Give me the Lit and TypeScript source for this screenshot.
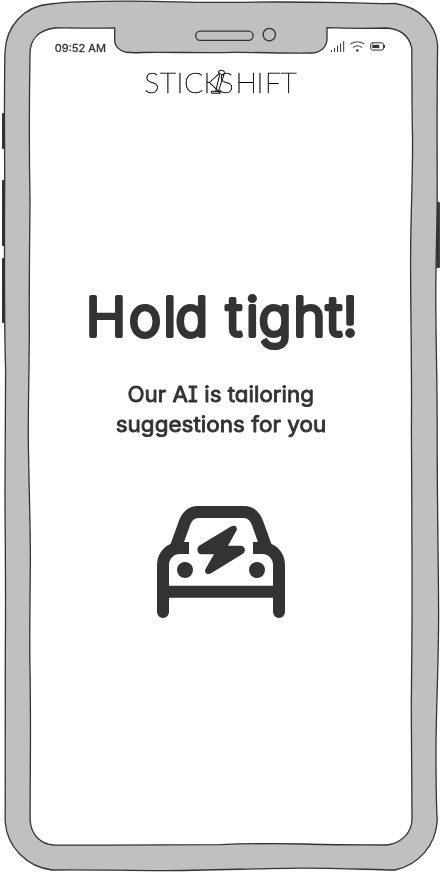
import { LitElement, html, css, svg } from "lit";
import { customElement } from "lit/decorators.js";

@customElement("phone-frame")
class PhoneFrame extends LitElement {
  static styles = css`
    :host { display: block; width: 442px; height: 873px; }
    svg { display: block; }
    .line { stroke: #333; stroke-width: 1.3; }
    .body { fill: #c0c0c0; }
    .screen { fill: #fff; }
    .none { fill: none; }
    .button { fill: #333; }
  `;
  render() {
    return html`<svg width="442" height="873" viewBox="0 0 442 873">
      ${[[2, 113, 36], [2, 180, 66], [2, 258, 65], [436.3, 202, 66]].map(
        ([x, y, h]) => svg`<rect class="button" x=${x} y=${y} width="3.6" height=${h} rx="1"/>`
      )}
      <path class="line body" d="M5 52 C6 26 24 6 50 4 C66 2 90 1.2 125 1.2 C160 1 190 2.6 221 2.4 C265 1.8 310 2 345 2.7 C365 3 378 4 395 3.5 C420 7 436 25 437.6 45 C436.8 100 437.2 145 437.2 190 C437.2 230 435.6 265 435.8 300 C436 350 437.2 380 437.2 430 C437 500 438.5 560 438.6 615 C438.5 670 436 710 436 750 C436 790 436 805 437.3 820 C436 846 418 865 395 870 C370 869.7 340 868 300 868.1 C260 868.3 210 870.6 160 870.7 C120 870.5 80 869.3 52 870 C27 867 7 847 5.2 822 C5.5 770 5 710 5.3 650 C6 590 5 530 5 490 C5.2 460 5.6 420 5.6 370 C4.4 335 4.4 260 4.6 200 C5 160 3.8 100 5 52Z"/>
      <path class="line screen" d="M114.7 27.9 C95 28.4 75 27.8 55 28 C39 30 30 39 30 54 C29.4 90 29 150 30 200 C29.6 250 29 290 29.3 330 C29.3 370 28.1 400 28.3 440 C29 490 30.3 520 30.4 560 C30 600 29.4 640 30 670 C31 720 30.2 770 30.1 820 C31 834 40 844.5 54 845 C110 845.2 170 845 221 844.6 C250 843.5 285 843.5 305 844 C335 845 360 844.7 387 845 C402 843 412 832 412 819 C412 780 411.3 750 411.3 710 C411.5 670 412.3 630 412 570 C412 520 411.6 480 411.4 430 C412 370 410.5 310 410.6 260 C410.6 215 413 175 412.5 135 C411.8 110 412 75 411.8 48 C409 36 400 29 387 28 C367 28.8 347 28.5 327 27.7 V40 C326 48 320 53 311 53 C285 53.4 260 52.3 235 52.4 C200 53.2 170 52 142 52.5 C134 53.4 130 52 126 52.3 C119 50.5 114.7 46 114.7 41Z"/>
      <rect class="line none" x="195.7" y="31.1" width="57.4" height="9.3" rx="4.6"/>
      <circle class="line none" cx="269.3" cy="34.6" r="6.2"/>
    </svg>`;
  }
}

@customElement("status-bar")
class StatusBar extends LitElement {
  static styles = css`
    :host { display: flex; justify-content: space-between; height: 18px; padding: 0 56px 0 54px; }
    svg { display: block; will-change: transform; }
    text { font: 400 10.8px Inter, "Noto Sans", sans-serif; fill: #333; stroke: #333; stroke-width: .3; }
    .stroke { fill: none; stroke: #333; stroke-width: 1; stroke-linecap: round; }
    .fill { fill: #333; }
  `;
  render() {
    return html`
      <svg width="60" height="18" viewBox="54 38 60 18"><text x="54.7" y="51.6" textLength="51.3" lengthAdjust="spacingAndGlyphs">09:52 AM</text></svg>
      <svg width="57" height="18" viewBox="329 38 57 18">
        <path class="stroke" d="M331.5 50.5V51.6M334.6 48.2V51.6M337.6 46V51.6M340.6 43.8V51.6M343.7 41.4V51.6"/>
        <path class="stroke" d="M350.7 43.8Q357.5 39.6 364.1 43.8M353.2 47.3Q357.5 44.2 361.6 47.3"/>
        <circle class="fill" cx="357.4" cy="50.5" r="1.2"/>
        <rect class="stroke" x="370.7" y="42.8" width="12.8" height="7.3" rx="2"/>
        <rect class="fill" x="372.3" y="44.8" width="7" height="3.3"/>
        <path class="stroke" d="M384.5 45.4V47.4"/>
      </svg>`;
  }
}

@customElement("brand-logo")
class BrandLogo extends LitElement {
  static styles = css`
    :host { display: block; align-self: center; }
    svg { display: block; will-change: transform; }
    text { font: 100 28.6px Lato, sans-serif; fill: #000; stroke: #000; stroke-width: .55; }
    .stick { fill: none; stroke: #000; stroke-width: 1; stroke-linejoin: round; }
  `;
  render() {
    return html`<svg width="160" height="32" viewBox="141 66 160 32">
      <text y="93.4" x="144.3 159.8 176.4 184 203.4 218.5 235.5 256.6 264.8 280.5">STICKSHIFT</text>
      <path class="stick" d="M218.5 71.3Q221 69 224 71.2Q225.7 72.5 224 74.5Q221.5 75.5 219 73.5ZM219.7 74.5L215.8 91M224 74.5L218.5 91M211.5 91.3H220V93.2H211.5Z"/>
    </svg>`;
  }
}

@customElement("loading-message")
class LoadingMessage extends LitElement {
  static styles = css`
    :host { display: block; align-self: center; }
    svg { display: block; will-change: transform; }
    text { font-family: Inter, "Noto Sans", sans-serif; font-feature-settings: "cv11", "cv08"; fill: #333; stroke: #333; stroke-linejoin: round; }
    .title { font-size: 54px; font-weight: 300; stroke-width: 4; }
    .note { font-size: 22px; font-weight: 400; stroke-width: .85; }
  `;
  render() {
    return html`<svg width="300" height="170" viewBox="71 280 300 170">
      <text class="title" y="336" x="86 129 163.4 175.6 212 226 245.9 258.7 293.4 326 342.6">Hold tight!</text>
      <text class="note" x="127.5" y="402.2" textLength="186.5" lengthAdjust="spacingAndGlyphs">Our AI is tailoring</text>
      <text class="note" x="115.7" y="432.2" textLength="210.5" lengthAdjust="spacingAndGlyphs">suggestions for you</text>
    </svg>`;
  }
}

@customElement("electric-car")
class ElectricCar extends LitElement {
  static styles = css`
    :host { display: block; align-self: center; }
    svg { display: block; }
    .stroke { fill: none; stroke: #333; stroke-width: 12; }
    .leg { stroke-linecap: round; }
    .fill { fill: #333; }
  `;
  render() {
    return html`<svg width="140" height="120" viewBox="151 502 140 120">
      <path class="stroke leg" d="M163 612V566M279 612V566"/>
      <path class="stroke" d="M163 567V565C163 555.5 170 548 180 548H189M279 567V565C279 555.5 272 548 262 548H253M163 591.8H279"/>
      <path class="stroke" d="M175.5 548L184.5 523C187.5 515 192 512 198 512H244C250 512 254.5 515 257.5 523L266.5 548"/>
      <circle class="fill" cx="185" cy="570" r="8"/><circle class="fill" cx="257" cy="570" r="8"/>
      <path class="fill" d="M231 526.5L199.5 545.5C196 548 197 554 201.5 554.3H214L205.5 569C203.5 573 208 575.5 211.5 573L242.5 554C246.5 551.5 245 546 241 545.7H228L236.5 530.5C238 527 234.5 524.5 231 526.5Z"/>
    </svg>`;
  }
}

@customElement("app-root")
class AppRoot extends LitElement {
  static styles = css`
    :host { display: grid; width: 442px; height: 873px; background: #fff; overflow: hidden; }
    phone-frame, .content { grid-area: 1 / 1; }
    .content { display: flex; flex-direction: column; padding-top: 38px; z-index: 1; }
    brand-logo { margin-top: 10px; }
    loading-message { margin-top: 182px; }
    electric-car { margin-top: 52px; }
  `;
  render() {
    return html`<phone-frame></phone-frame>
      <main class="content">
        <status-bar></status-bar>
        <brand-logo></brand-logo>
        <loading-message></loading-message>
        <electric-car></electric-car>
      </main>`;
  }
}
